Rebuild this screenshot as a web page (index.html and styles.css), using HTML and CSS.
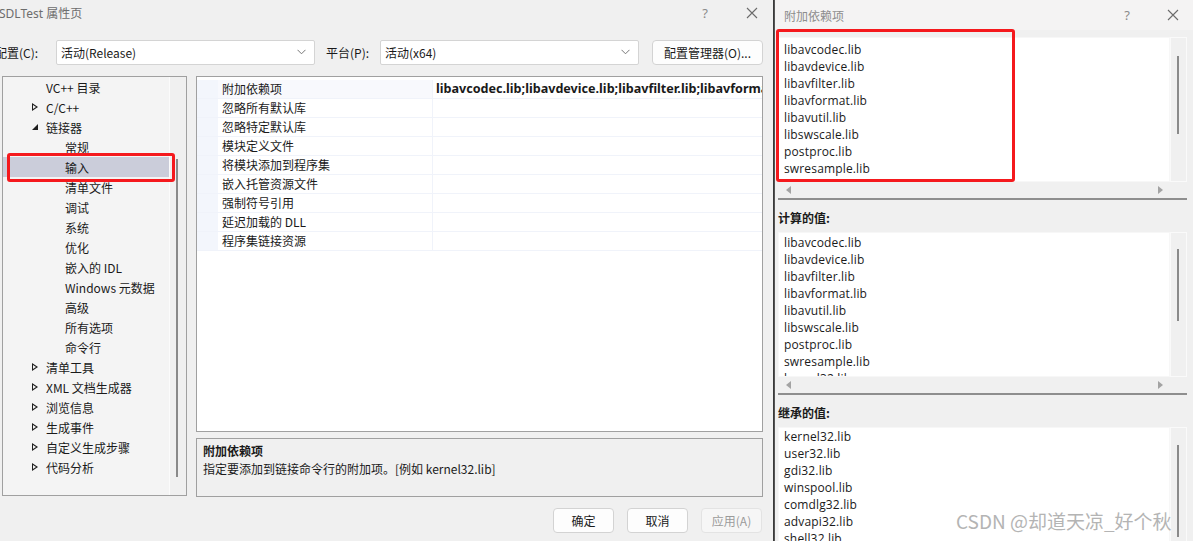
FILE: index.html
```html
<!DOCTYPE html>
<html>
    <head>
        <title>SDLTest 属性页</title>
        <link rel="stylesheet" href="styles.css">
    </head>
    <body>
        <div class="screen">
            <!-- left: property pages dialog -->
            <div class="dialog">
                <div class="titlebar">
                    <span class="titlebar__text">SDLTest 属性页</span>
                    <span class="titlebar__help">?</span>
                    <svg class="titlebar__close" width="12" height="12" viewBox="0 0 12 12"><path d="M1 1 L11 11 M11 1 L1 11" stroke="#6b6b6b" stroke-width="1.1" fill="none"/></svg>
                </div>
                <div class="config">
                    <span class="config__label config__label--first">配置(C):</span>
                    <div class="combo">
                        <span>活动(Release)</span>
                        <svg width="9" height="6" viewBox="0 0 9 6"><path d="M0.5 0.8 L4.5 4.8 L8.5 0.8" stroke="#777" fill="none"/></svg>
                    </div>
                    <span class="config__label">平台(P):</span>
                    <div class="combo">
                        <span>活动(x64)</span>
                        <svg width="9" height="6" viewBox="0 0 9 6"><path d="M0.5 0.8 L4.5 4.8 L8.5 0.8" stroke="#777" fill="none"/></svg>
                    </div>
                    <button class="btn btn--manager">配置管理器(O)...</button>
                </div>
                <div class="main">
                    <div class="tree">
                        <ul class="tree__list">
                            <li class="tree__item">VC++ 目录</li>
                            <li class="tree__item"><i class="arrow"></i>C/C++</li>
                            <li class="tree__item"><i class="arrow arrow--open"></i>链接器</li>
                            <li class="tree__item tree__item--child">常规</li>
                            <li class="tree__item tree__item--child tree__item--selected">输入</li>
                            <li class="tree__item tree__item--child">清单文件</li>
                            <li class="tree__item tree__item--child">调试</li>
                            <li class="tree__item tree__item--child">系统</li>
                            <li class="tree__item tree__item--child">优化</li>
                            <li class="tree__item tree__item--child">嵌入的 IDL</li>
                            <li class="tree__item tree__item--child">Windows 元数据</li>
                            <li class="tree__item tree__item--child">高级</li>
                            <li class="tree__item tree__item--child">所有选项</li>
                            <li class="tree__item tree__item--child">命令行</li>
                            <li class="tree__item"><i class="arrow"></i>清单工具</li>
                            <li class="tree__item"><i class="arrow"></i>XML 文档生成器</li>
                            <li class="tree__item"><i class="arrow"></i>浏览信息</li>
                            <li class="tree__item"><i class="arrow"></i>生成事件</li>
                            <li class="tree__item"><i class="arrow"></i>自定义生成步骤</li>
                            <li class="tree__item"><i class="arrow"></i>代码分析</li>
                        </ul>
                        <div class="tree__scroll"><div class="tree__thumb"></div></div>
                        <div class="mark mark--tree"></div>
                    </div>
                    <div class="content">
                        <div class="grid">
                            <div class="grid__row">
                                <div class="grid__name">附加依赖项</div>
                                <div class="grid__value">libavcodec.lib;libavdevice.lib;libavfilter.lib;libavformat.lib;libavutil.lib;libswscale.lib;postproc.lib;swresample.lib;%(AdditionalDependencies)</div>
                            </div>
                            <div class="grid__row"><div class="grid__name">忽略所有默认库</div><div class="grid__value"></div></div>
                            <div class="grid__row"><div class="grid__name">忽略特定默认库</div><div class="grid__value"></div></div>
                            <div class="grid__row"><div class="grid__name">模块定义文件</div><div class="grid__value"></div></div>
                            <div class="grid__row"><div class="grid__name">将模块添加到程序集</div><div class="grid__value"></div></div>
                            <div class="grid__row"><div class="grid__name">嵌入托管资源文件</div><div class="grid__value"></div></div>
                            <div class="grid__row"><div class="grid__name">强制符号引用</div><div class="grid__value"></div></div>
                            <div class="grid__row"><div class="grid__name">延迟加载的 DLL</div><div class="grid__value"></div></div>
                            <div class="grid__row"><div class="grid__name">程序集链接资源</div><div class="grid__value"></div></div>
                        </div>
                        <div class="desc">
                            <div class="desc__title">附加依赖项</div>
                            <div class="desc__text">指定要添加到链接命令行的附加项。[例如 kernel32.lib]</div>
                        </div>
                    </div>
                </div>
                <div class="actions">
                    <button class="btn btn--action">确定</button>
                    <button class="btn btn--action">取消</button>
                    <button class="btn btn--action btn--disabled">应用(A)</button>
                </div>
            </div>

            <!-- right: additional dependencies editor -->
            <div class="editor">
                <div class="titlebar titlebar--editor">
                    <span class="titlebar__text titlebar__text--editor">附加依赖项</span>
                    <span class="titlebar__help">?</span>
                    <svg class="titlebar__close" width="12" height="12" viewBox="0 0 12 12"><path d="M1 1 L11 11 M11 1 L1 11" stroke="#6b6b6b" stroke-width="1.1" fill="none"/></svg>
                </div>
                <div class="editor__body">
                    <div class="listbox listbox--input">
                        <div class="listbox__main">
                            <div class="listbox__text">
                                <div>libavcodec.lib</div>
                                <div>libavdevice.lib</div>
                                <div>libavfilter.lib</div>
                                <div>libavformat.lib</div>
                                <div>libavutil.lib</div>
                                <div>libswscale.lib</div>
                                <div>postproc.lib</div>
                                <div>swresample.lib</div>
                            </div>
                            <div class="vscroll"><div class="vscroll__thumb vscroll__thumb--input"></div></div>
                        </div>
                        <div class="hscroll">
                            <svg width="6" height="8" viewBox="0 0 6 8"><path d="M5 0 L0 4 L5 8 Z" fill="#a3a3a3"/></svg>
                            <svg width="6" height="8" viewBox="0 0 6 8"><path d="M0 0 L5 4 L0 8 Z" fill="#a3a3a3"/></svg>
                        </div>
                        <div class="mark mark--input"></div>
                    </div>

                    <div class="editor__label">计算的值:</div>
                    <div class="listbox listbox--computed">
                        <div class="listbox__main">
                            <div class="listbox__text listbox__text--plain">
                                <div>libavcodec.lib</div>
                                <div>libavdevice.lib</div>
                                <div>libavfilter.lib</div>
                                <div>libavformat.lib</div>
                                <div>libavutil.lib</div>
                                <div>libswscale.lib</div>
                                <div>postproc.lib</div>
                                <div>swresample.lib</div>
                                <div>kernel32.lib</div>
                            </div>
                            <div class="vscroll"><div class="vscroll__thumb vscroll__thumb--computed"></div></div>
                        </div>
                        <div class="hscroll">
                            <svg width="6" height="8" viewBox="0 0 6 8"><path d="M5 0 L0 4 L5 8 Z" fill="#a3a3a3"/></svg>
                            <svg width="6" height="8" viewBox="0 0 6 8"><path d="M0 0 L5 4 L0 8 Z" fill="#a3a3a3"/></svg>
                        </div>
                    </div>

                    <div class="editor__label">继承的值:</div>
                    <div class="listbox listbox--inherited">
                        <div class="listbox__main">
                            <div class="listbox__text listbox__text--plain listbox__text--last">
                                <div>kernel32.lib</div>
                                <div>user32.lib</div>
                                <div>gdi32.lib</div>
                                <div>winspool.lib</div>
                                <div>comdlg32.lib</div>
                                <div>advapi32.lib</div>
                                <div>shell32.lib</div>
                                <div>ole32.lib</div>
                            </div>
                            <div class="vscroll"><div class="vscroll__thumb vscroll__thumb--inherited"></div></div>
                        </div>
                    </div>
                </div>
                <div class="watermark">CSDN @却道天凉_好个秋</div>
            </div>
        </div>
    </body>
</html>
```

FILE: styles.css
```css
* {
  box-sizing: border-box;
  margin: 0;
  padding: 0;
}

body {
  font-family: "Noto Sans", "Noto Sans CJK SC", sans-serif;
  font-size: 12px;
  color: #1a1a1a;
  background-color: #f0f0f0;
  overflow: hidden;
}

.screen {
  display: flex;
  width: 1193px;
  height: 541px;
  overflow: hidden;
}

/* ---------- shared ---------- */

.titlebar {
  display: flex;
  align-items: center;
  height: 26px;
}

.titlebar__text {
  flex: 1;
  color: #6d6d6d;
  font-size: 12px;
  margin-left: -1px;
}

.titlebar__help {
  color: #8a8a8a;
  font-size: 13px;
  margin-right: 38px;
}

.titlebar__close {
  margin-right: 15px;
}

.btn {
  font-family: "Noto Sans CJK SC", sans-serif;
  font-size: 12px;
  color: #1a1a1a;
  background-color: #fdfdfd;
  border: 1px solid #d3d3d3;
  border-radius: 4px;
}

.mark {
  position: absolute;
  border: 3px solid #f5191d;
  border-radius: 3px;
  pointer-events: none;
}

/* ---------- property pages ---------- */

.dialog {
  width: 774px;
  flex-shrink: 0;
  border-right: 1px solid #3a3a3a;
}

.config {
  display: flex;
  align-items: center;
  height: 26px;
  margin-top: 13px;
}

.config__label {
  font-family: "Noto Sans CJK SC", sans-serif;
  width: 54px;
}

.config__label--first {
  width: 61px;
  margin-left: -5px;
}

.combo {
  display: flex;
  align-items: center;
  justify-content: space-between;
  width: 259px;
  height: 25px;
  padding: 0 8px 0 4px;
  margin-right: 11px;
  background-color: #fff;
  border: 1px solid #d4d4d4;
  border-radius: 2px;
  font-family: "Noto Sans CJK SC", sans-serif;
}

.btn--manager {
  width: 111px;
  height: 25px;
  margin-left: 2px;
}

.main {
  display: flex;
  margin-top: 11px;
  height: 422px;
}

.tree {
  position: relative;
  display: flex;
  width: 185px;
  height: 420px;
  margin-left: 2px;
  border: 1px solid #a0a0a0;
  background-color: #f4f4f4;
}

.tree__list {
  list-style: none;
  flex: 1;
  font-family: "Noto Sans CJK SC", sans-serif;
  font-size: 12px;
}

.tree__item {
  display: flex;
  align-items: center;
  height: 20px;
  padding-left: 43px;
}

.tree__item--child {
  padding-left: 62px;
}

.tree__item--selected {
  background-color: #cbcdda;
}

.arrow {
  width: 0;
  height: 0;
  margin-left: -14px;
  margin-right: 8px;
  position: relative;
  border-top: 4px solid transparent;
  border-bottom: 4px solid transparent;
  border-left: 6px solid #1e1e1e;
}

.arrow::after {
  content: "";
  position: absolute;
  top: -2px;
  left: -5px;
  border-top: 2px solid transparent;
  border-bottom: 2px solid transparent;
  border-left: 3px solid #f4f4f4;
}

.arrow--open {
  border: none;
  border-right: 6px solid #1e1e1e;
  border-top: 6px solid transparent;
}

.arrow--open::after {
  display: none;
}

.tree__scroll {
  width: 17px;
  background-color: #f0f0f0;
  border-left: 1px solid #fbfbfb;
  padding-top: 82px;
}

.tree__thumb {
  width: 2px;
  height: 318px;
  margin-left: 6px;
  background-color: #8a8a8a;
}

.mark--tree {
  left: 4px;
  top: 76px;
  width: 168px;
  height: 29px;
}

.content {
  margin-left: 9px;
  width: 567px;
}

.grid {
  height: 356px;
  padding-top: 3px;
  background-color: #fff;
  border: 1px solid #a0a0a0;
  overflow: hidden;
}

.grid__row {
  display: flex;
  height: 19px;
  border-bottom: 1px solid #f0f3fa;
  background-color: #fff;
}

.grid__name {
  width: 236px;
  padding-left: 25px;
  line-height: 18px;
  font-family: "Noto Sans CJK SC", sans-serif;
  background: linear-gradient(to right, #f3f6fc 21px, #fff 21px);
  border-right: 1px solid #f0f3fa;
}

.grid__value {
  flex: 1;
  padding-left: 3px;
  line-height: 18px;
  font-size: 12.6px;
  font-weight: bold;
  white-space: nowrap;
  overflow: hidden;
}

.grid__row:first-child .grid__name {
  background: linear-gradient(to right, #f3f6fc 21px, #f8f9fd 21px);
}

.desc {
  height: 59px;
  margin-top: 6px;
  padding: 3px 6px;
  border: 1px solid #a0a0a0;
  font-family: "Noto Sans CJK SC", sans-serif;
  line-height: 18px;
}

.desc__title {
  font-weight: bold;
}

.actions {
  display: flex;
  justify-content: flex-end;
  gap: 13px;
  margin-top: 10px;
  padding-right: 11px;
}

.btn--action {
  width: 61px;
  height: 25px;
}

.btn--disabled {
  color: #9b9b9b;
  background-color: #f6f6f6;
  border-color: #e3e3e3;
}

/* ---------- dependency editor ---------- */

.editor {
  position: relative;
  flex: 1;
  border-left: 1px solid #555;
  background-color: #f0f0f0;
}

.titlebar--editor {
  height: 30px;
  background-color: #f4f3f3;
}

.titlebar__text--editor {
  color: #8d8d8d;
  margin-left: 9px;
  font-family: "Noto Sans CJK SC", sans-serif;
}

.titlebar--editor .titlebar__help {
  margin-right: 37px;
}

.titlebar--editor .titlebar__close {
  margin-right: 14px;
}

.editor__body {
  padding: 7px 6px 0 3px;
}

.editor__label {
  height: 32px;
  line-height: 35px;
  font-family: "Noto Sans CJK SC", sans-serif;
  font-weight: bold;
  font-size: 12px;
}

.listbox {
  position: relative;
  border-bottom: 2px solid #8e8e8e;
}

.listbox--input,
.listbox--computed {
  height: 163px;
}

.listbox--inherited {
  height: 140px;
  border-bottom: none;
}

.listbox__main {
  display: flex;
  height: 145px;
}

.listbox--inherited .listbox__main {
  height: 140px;
}

.listbox__text {
  flex: 1;
  background-color: #fff;
  padding: 3px 0 0 5px;
  border: 1px solid #f7f7f7;
  line-height: 17px;
  font-family: "Open Sans", sans-serif;
  font-size: 12px;
  letter-spacing: 0.15px;
  overflow: hidden;
}

.listbox__text--plain {
  padding-top: 1px;
}

.listbox__text--last {
  padding-top: 0;
}

.vscroll {
  width: 17px;
  background-color: #f0f0f0;
  border: 1px solid #fafafa;
}

.vscroll__thumb {
  width: 2px;
  margin-left: 6px;
  background-color: #8a8a8a;
}

.vscroll__thumb--input {
  height: 78px;
  margin-top: 18px;
}

.vscroll__thumb--computed {
  height: 72px;
  margin-top: 16px;
}

.vscroll__thumb--inherited {
  height: 92px;
  margin-top: 17px;
}

.hscroll {
  display: flex;
  align-items: center;
  justify-content: space-between;
  height: 16px;
  padding: 0 23px 0 8px;
  background-color: #f0f0f0;
}

.mark--input {
  left: -2px;
  top: -8px;
  width: 239px;
  height: 153px;
}

.watermark {
  position: absolute;
  left: 181px;
  top: 507px;
  font-family: "Noto Sans CJK SC", sans-serif;
  font-size: 19px;
  color: #b4b4b4;
  text-shadow: 0 0 2px #fff;
  white-space: nowrap;
}
```
